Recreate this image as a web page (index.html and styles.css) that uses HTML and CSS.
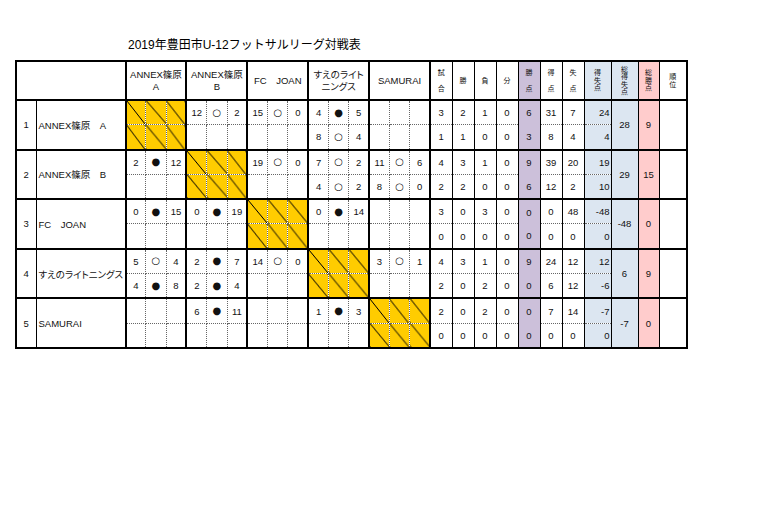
FILE: index.html
```html
<!DOCTYPE html>
<html lang="ja">
<head>
<meta charset="utf-8">
<title>2019年豊田市U-12フットサルリーグ対戦表</title>
<link rel="stylesheet" href="styles.css">
</head>
<body>
<div class="page">
  <h1 class="title">2019年豊田市U-12フットサルリーグ対戦表</h1>
  <table class="league">
    <colgroup>
      <col class="c-no"><col class="c-name">
      <col class="c-s"><col class="c-s"><col class="c-s">
      <col class="c-s"><col class="c-s"><col class="c-s">
      <col class="c-s"><col class="c-s"><col class="c-s">
      <col class="c-s"><col class="c-s"><col class="c-s">
      <col class="c-s"><col class="c-s"><col class="c-s">
      <col class="c-st"><col class="c-st"><col class="c-st"><col class="c-st">
      <col class="c-st"><col class="c-st"><col class="c-st">
      <col class="c-gd"><col class="c-gd"><col class="c-tp"><col class="c-rk">
    </colgroup>
    <thead>
      <tr class="head">
        <th colspan="2" class="corner"></th>
        <th colspan="3" class="bh">ANNEX篠原<br>A</th>
        <th colspan="3" class="bh">ANNEX篠原<br>B</th>
        <th colspan="3" class="bh">FC　JOAN</th>
        <th colspan="3" class="bh kana">すえのライト<br>ニングス</th>
        <th colspan="3" class="bh">SAMURAI</th>
        <th class="sh first"><span class="v2">試<br>合</span></th>
        <th class="sh"><span class="v1">勝</span></th>
        <th class="sh"><span class="v1">負</span></th>
        <th class="sh"><span class="v1">分</span></th>
        <th class="sh pu"><span class="v2">勝<br>点</span></th>
        <th class="sh"><span class="v2">得<br>点</span></th>
        <th class="sh"><span class="v2">失<br>点</span></th>
        <th class="sh lb"><span class="v3">得<br>失<br>点</span></th>
        <th class="sh lb"><span class="v3">総<br>得<br>失<br>点</span></th>
        <th class="sh pk"><span class="v3">総<br>勝<br>点</span></th>
        <th class="sh"><span class="v3">順<br>位</span></th>
      </tr>
    </thead>
    <tbody>
      <!-- Team 1 -->
      <tr class="a">
        <td rowspan="2" class="no">1</td>
        <td rowspan="2" class="name">ANNEX篠原　A</td>
        <td class="bs x"></td><td class="x"></td><td class="x"></td>
        <td class="bs">12</td><td class="m">○</td><td>2</td>
        <td class="bs">15</td><td class="m">○</td><td>0</td>
        <td class="bs">4</td><td class="m">●</td><td>5</td>
        <td class="bs"></td><td></td><td></td>
        <td class="st first">3</td><td class="st">2</td><td class="st">1</td><td class="st">0</td>
        <td class="st pu">6</td><td class="st">31</td><td class="st">7</td><td class="st lb gd">24</td>
        <td rowspan="2" class="st lb">28</td><td rowspan="2" class="st pk">9</td><td rowspan="2" class="st rk"></td>
      </tr>
      <tr class="b">
        <td class="bs x"></td><td class="x"></td><td class="x"></td>
        <td class="bs"></td><td></td><td></td>
        <td class="bs"></td><td></td><td></td>
        <td class="bs">8</td><td class="m">○</td><td>4</td>
        <td class="bs"></td><td></td><td></td>
        <td class="st first">1</td><td class="st">1</td><td class="st">0</td><td class="st">0</td>
        <td class="st pu">3</td><td class="st">8</td><td class="st">4</td><td class="st lb gd">4</td>
      </tr>
      <!-- Team 2 -->
      <tr class="a">
        <td rowspan="2" class="no">2</td>
        <td rowspan="2" class="name">ANNEX篠原　B</td>
        <td class="bs">2</td><td class="m">●</td><td>12</td>
        <td class="bs x"></td><td class="x"></td><td class="x"></td>
        <td class="bs">19</td><td class="m">○</td><td>0</td>
        <td class="bs">7</td><td class="m">○</td><td>2</td>
        <td class="bs">11</td><td class="m">○</td><td>6</td>
        <td class="st first">4</td><td class="st">3</td><td class="st">1</td><td class="st">0</td>
        <td class="st pu">9</td><td class="st">39</td><td class="st">20</td><td class="st lb gd">19</td>
        <td rowspan="2" class="st lb">29</td><td rowspan="2" class="st pk">15</td><td rowspan="2" class="st rk"></td>
      </tr>
      <tr class="b">
        <td class="bs"></td><td></td><td></td>
        <td class="bs x"></td><td class="x"></td><td class="x"></td>
        <td class="bs"></td><td></td><td></td>
        <td class="bs">4</td><td class="m">○</td><td>2</td>
        <td class="bs">8</td><td class="m">○</td><td>0</td>
        <td class="st first">2</td><td class="st">2</td><td class="st">0</td><td class="st">0</td>
        <td class="st pu">6</td><td class="st">12</td><td class="st">2</td><td class="st lb gd">10</td>
      </tr>
      <!-- Team 3 -->
      <tr class="a">
        <td rowspan="2" class="no">3</td>
        <td rowspan="2" class="name">FC　JOAN</td>
        <td class="bs">0</td><td class="m">●</td><td>15</td>
        <td class="bs">0</td><td class="m">●</td><td>19</td>
        <td class="bs x"></td><td class="x"></td><td class="x"></td>
        <td class="bs">0</td><td class="m">●</td><td>14</td>
        <td class="bs"></td><td></td><td></td>
        <td class="st first">3</td><td class="st">0</td><td class="st">3</td><td class="st">0</td>
        <td class="st pu">0</td><td class="st">0</td><td class="st">48</td><td class="st lb gd">-48</td>
        <td rowspan="2" class="st lb">-48</td><td rowspan="2" class="st pk">0</td><td rowspan="2" class="st rk"></td>
      </tr>
      <tr class="b">
        <td class="bs"></td><td></td><td></td>
        <td class="bs"></td><td></td><td></td>
        <td class="bs x"></td><td class="x"></td><td class="x"></td>
        <td class="bs"></td><td></td><td></td>
        <td class="bs"></td><td></td><td></td>
        <td class="st first">0</td><td class="st">0</td><td class="st">0</td><td class="st">0</td>
        <td class="st pu">0</td><td class="st">0</td><td class="st">0</td><td class="st lb gd">0</td>
      </tr>
      <!-- Team 4 -->
      <tr class="a">
        <td rowspan="2" class="no">4</td>
        <td rowspan="2" class="name kana">すえのライトニングス</td>
        <td class="bs">5</td><td class="m">○</td><td>4</td>
        <td class="bs">2</td><td class="m">●</td><td>7</td>
        <td class="bs">14</td><td class="m">○</td><td>0</td>
        <td class="bs x"></td><td class="x"></td><td class="x"></td>
        <td class="bs">3</td><td class="m">○</td><td>1</td>
        <td class="st first">4</td><td class="st">3</td><td class="st">1</td><td class="st">0</td>
        <td class="st pu">9</td><td class="st">24</td><td class="st">12</td><td class="st lb gd">12</td>
        <td rowspan="2" class="st lb">6</td><td rowspan="2" class="st pk">9</td><td rowspan="2" class="st rk"></td>
      </tr>
      <tr class="b">
        <td class="bs">4</td><td class="m">●</td><td>8</td>
        <td class="bs">2</td><td class="m">●</td><td>4</td>
        <td class="bs"></td><td></td><td></td>
        <td class="bs x"></td><td class="x"></td><td class="x"></td>
        <td class="bs"></td><td></td><td></td>
        <td class="st first">2</td><td class="st">0</td><td class="st">2</td><td class="st">0</td>
        <td class="st pu">0</td><td class="st">6</td><td class="st">12</td><td class="st lb gd">-6</td>
      </tr>
      <!-- Team 5 -->
      <tr class="a">
        <td rowspan="2" class="no">5</td>
        <td rowspan="2" class="name">SAMURAI</td>
        <td class="bs"></td><td></td><td></td>
        <td class="bs">6</td><td class="m">●</td><td>11</td>
        <td class="bs"></td><td></td><td></td>
        <td class="bs">1</td><td class="m">●</td><td>3</td>
        <td class="bs x"></td><td class="x"></td><td class="x"></td>
        <td class="st first">2</td><td class="st">0</td><td class="st">2</td><td class="st">0</td>
        <td class="st pu">0</td><td class="st">7</td><td class="st">14</td><td class="st lb gd">-7</td>
        <td rowspan="2" class="st lb">-7</td><td rowspan="2" class="st pk">0</td><td rowspan="2" class="st rk"></td>
      </tr>
      <tr class="b">
        <td class="bs"></td><td></td><td></td>
        <td class="bs"></td><td></td><td></td>
        <td class="bs"></td><td></td><td></td>
        <td class="bs"></td><td></td><td></td>
        <td class="bs x"></td><td class="x"></td><td class="x"></td>
        <td class="st first">0</td><td class="st">0</td><td class="st">0</td><td class="st">0</td>
        <td class="st pu">0</td><td class="st">0</td><td class="st">0</td><td class="st lb gd">0</td>
      </tr>
    </tbody>
  </table>
</div>
</body>
</html>
```
FILE: styles.css
```css
html, body {
  margin: 0;
  padding: 0;
  background: #fff;
}

body {
  font-family: "Liberation Sans", "Noto Sans CJK JP", sans-serif;
  color: #111;
  font-size: 9.5px;
}

.page {
  padding: 37px 0 0 15px;
}

.title {
  margin: 0 0 7px 113px;
  font-size: 12px;
  line-height: 16px;
  font-weight: normal;
  color: #000;
}

.league {
  border-collapse: collapse;
  table-layout: fixed;
  width: 672px;
  border: 2px solid #000;
}

.c-no { width: 20px; }
.c-name { width: 89.5px; }
.c-s { width: 20.3px; }
.c-st { width: 22px; }
.c-gd { width: 27px; }
.c-tp { width: 21px; }
.c-rk { width: 28px; }

.league th,
.league td {
  padding: 0;
  text-align: center;
  vertical-align: middle;
  overflow: hidden;
  white-space: nowrap;
  font-weight: normal;
}

.kana {
  font-feature-settings: "palt";
}

/* header */
.head th {
  height: 37px;
  border: 1px solid #000;
  border-bottom: 2px solid #000;
  line-height: 12px;
}

.head .bh {
  border-left: 2px solid #000;
}

.head .sh {
  font-size: 7px;
}

.head .sh.first {
  border-left: 2px solid #000;
}

.v1 { display: block; line-height: 8px; }
.v2 { display: block; line-height: 15.5px; }
.v3 { display: block; line-height: 7.5px; font-size: 7px; }

/* body cells */
.league td {
  height: 23.3px;
  border: 1px dotted #666;
  color: #111;
}

.league tr.a td {
  border-top: 2px solid #000;
}

.league td.no {
  border-right: 1px solid #000;
}

.league td.name {
  text-align: left;
  padding-left: 2px;
}

.league td.bs {
  border-left: 2px solid #000;
}

.league td.m {
  font-family: "DejaVu Sans", sans-serif;
  font-size: 10px;
  line-height: 10px;
}

.league td.st {
  border-left: 1px solid #000;
  border-right: 1px solid #000;
}

.league td.st.first {
  border-left: 2px solid #000;
}

.league td.gd {
  text-align: right;
  padding-right: 1px;
}

.league tr.b td.pu {
  border-top: hidden;
}

.league td.rk {
  border-right: 2px solid #000;
}

/* shaded columns */
.pu { background: #ccc0da; }
.lb { background: #dce6f1; }
.pk { background: #ffcccc; }

/* diagonal (self-match) cells */
.league td.x {
  background-color: #ffcc00;
  background-image: linear-gradient(to top right,
    transparent calc(50% - 0.8px),
    #000 50%,
    transparent calc(50% + 0.8px));
}
```
